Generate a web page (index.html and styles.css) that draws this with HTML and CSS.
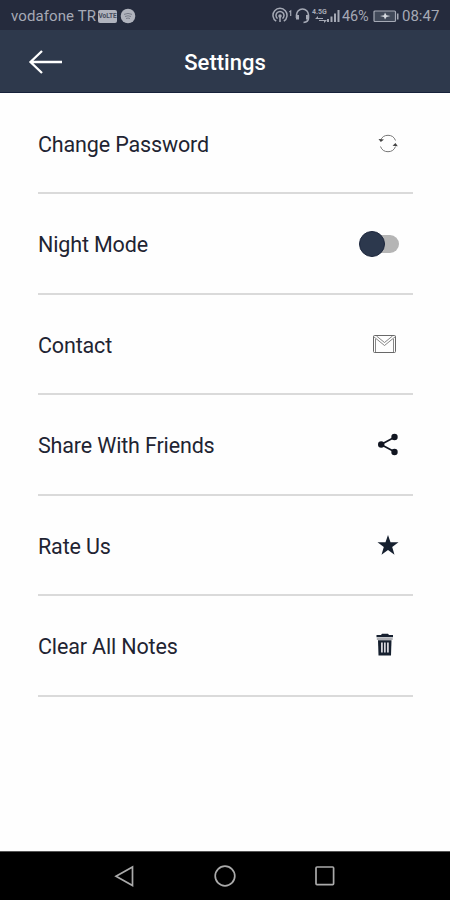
FILE: index.html
```html
<!DOCTYPE html>
<html lang="en">
<head>
<meta charset="utf-8">
<title>Settings</title>
<link rel="stylesheet" href="styles.css">
</head>
<body>
<div class="status">
  <span class="carrier">vodafone TR</span>
  <span class="volte">VoLTE</span>
  <svg class="badge" width="16" height="16" viewBox="0 0 16 16"><circle cx="8" cy="8" r="7.3" fill="#b0b3bd"/><path d="M4 6.4q4-2 8 0M5 8.5q3-1.5 6 0M6 10.5q2-1 4 0" fill="none" stroke="#777b88"/></svg>
  <div class="indicators">
    <svg width="22" height="18" viewBox="0 0 22 18" fill="none" stroke="#a5a9b5" stroke-width="1.5"><path d="M4.2 14.2a7 7 0 1 1 7.6 0M5.5 11.6a4 4 0 1 1 5 0M8 9v6"/><circle cx="8" cy="9" r="1" fill="#a5a9b5"/><path d="M17.3 5l1.4-1v5" stroke-width="1.2"/></svg>
    <svg width="17" height="18" viewBox="0 0 17 18" fill="none" stroke="#a5a9b5" stroke-width="1.6"><path d="M2.5 11V8a6 6 0 0 1 12 0v3q0 4-5 4.500"/><path d="M3.500 8v4.500M13.500 8v4.500" stroke-width="3"/></svg>
    <div class="network"><span>4.5G</span><svg width="12" height="7" viewBox="0 0 12 7" fill="#a5a9b5"><path d="M0 3l3-3v2h5v1zM12 4l-3 3V5H4V4z"/></svg></div>
    <svg class="signal" width="13" height="16" viewBox="0 0 13 16" fill="#a5a9b5"><path d="M0 11h2v3H0zM3.500 8.500h2V14h-2zM7 5.500h2V14H7zM10.500 2h2v12h-2z"/></svg>
    <span class="percent">46%</span>
    <svg class="battery" width="26" height="13" viewBox="0 0 26 13"><rect x="1" y="1" width="21.500" height="10.500" rx="1" fill="#414959" stroke="#a5a9b5" stroke-width="1.200"/><path d="M24 3.500h1.500v6H24z" fill="#a5a9b5"/><path d="M7 6l4-.8 1-2.700 1.500 2.700 4 .800-4 1-1.500 2.500-1-2.500z" fill="#d7dae0"/></svg>
    <span class="clock">08:47</span>
  </div>
</div>
<header class="bar">
  <svg class="back" width="36" height="28" viewBox="0 0 36 28" fill="none" stroke="#fff" stroke-width="2.300"><path d="M34 14H3M14 3L2.500 14 14 25"/></svg>
  <h1>Settings</h1>
</header>
<main>
  <div class="row"><span>Change Password</span>
    <svg width="50" height="28" viewBox="0 0 50 28" fill="none" stroke="#777" stroke-width="1"><path d="M17.500 10.500a8 8 0 0 1 15 0M32.500 16.500a8 8 0 0 1-15 0"/><path d="M15.500 9l2.300 3 3.200-2.500zM29.500 15.800l3-2.800 2.300 3.300z" fill="#444" stroke="none"/></svg></div>
  <div class="row"><span>Night Mode</span>
    <div class="switch"><i></i></div></div>
  <div class="row"><span>Contact</span>
    <svg width="50" height="28" viewBox="0 0 50 28" fill="none" stroke="#686868" stroke-width="1"><rect x="10.500" y="4.500" width="22" height="17" rx="1"/><path d="M10.500 5.500l11 9 11-9M13.500 5l8 6.500 8-6.500M12.500 8v13M30.500 8v13" stroke-width=".8"/></svg></div>
  <div class="row"><span>Share With Friends</span>
    <svg width="50" height="28" viewBox="0 0 50 28" fill="#111521" stroke="#111521"><path d="M31.500 6.200L18 13.500l13.500 7.300" fill="none" stroke-width="1.700"/><g stroke="none"><circle cx="31.500" cy="6" r="3.200"/><circle cx="18.200" cy="13.500" r="3.200"/><circle cx="31.500" cy="21" r="3.200"/></g></svg></div>
  <div class="row"><span>Rate Us</span>
    <svg width="50" height="28" viewBox="0 0 50 28" fill="#16202f"><path d="M25 3l2.500 7.200H35.500l-6.300 4.800 2.300 7.700L25 18l-6.500 4.700 2.300-7.700-6.300-4.800H22.500z"/></svg></div>
  <div class="row"><span>Clear All Notes</span>
    <svg width="50" height="28" viewBox="0 0 50 28"><path d="M19 1.800h6l1 1.200h4v2.300H13.500V3H18z" fill="#16202f"/><path d="M13.800 6.200h15.900v1.600H13.800z" fill="#9b9da3"/><path d="M15 8.200h13.500l-.5 15.300H15.500z" fill="#16202f"/><path d="M18 10.500h1.800v10H18zM21 10.500h1.700v10H21zM24 10.500h1.800v10H24z" fill="#d4d4da"/></svg></div>
</main>
<nav>
  <svg width="24" height="24" viewBox="0 0 24 24"><path d="M19.500 3v18.500L3 12.300z"/></svg>
  <svg width="24" height="24" viewBox="0 0 24 24"><circle cx="12" cy="12" r="9.800"/></svg>
  <svg width="24" height="24" viewBox="0 0 24 24"><rect x="3" y="3" width="17.600" height="17.600" rx="1"/></svg>
</nav>
</body>
</html>
```
FILE: styles.css
```css
* { box-sizing: border-box; }
body { margin: 0; width: 450px; height: 900px; display: flex; flex-direction: column; background: #fefefe; font-family: Roboto, sans-serif; overflow: hidden; }
svg { display: block; flex: none; }
.status { height: 30px; padding: 2px 10px 0 11px; display: flex; align-items: center; background: #252b3d; color: #a5a9b5; font-size: 15px; white-space: nowrap; }
.carrier { width: 87px; flex: none; letter-spacing: .1px; }
.volte { width: 19px; height: 13px; flex: none; border-radius: 2px; background: #b0b3bd; color: #454b5b; font-size: 6.5px; font-weight: 700; line-height: 13px; text-align: center; }
.badge { margin-left: 3px; }
.indicators { margin-left: auto; display: flex; align-items: center; }
.network { width: 15px; margin-left: 1px; font-size: 7px; line-height: 7px; font-weight: 700; }
.network svg { margin-left: 3px; }
.percent { width: 28px; margin-left: 2px; font-size: 14.5px; letter-spacing: -.2px; }
.battery { margin-left: 3px; }
.clock { width: 38px; margin-left: 3px; }
.bar { height: 63px; display: grid; grid-template-columns: 62px 1fr 62px; align-items: center; background: #2e394c; border-bottom: 1px solid #17213a; color: #fff; }
.back { margin: 1px 0 0 28px; }
h1 { margin: 3px 0 0; font-size: 22px; line-height: 28px; font-weight: 500; text-align: center; }
main { flex: 1; padding: .5px 37px 0 38px; }
.row { height: 100.5px; padding-top: 2px; border-bottom: 2px solid #dadada; display: flex; align-items: center; justify-content: space-between; color: #1f2432; font-size: 21.5px; letter-spacing: -.15px; white-space: nowrap; }
.row span { padding-top: 1px; }
.switch { width: 54px; height: 26px; display: flex; align-items: center; }
.switch::after { content: ""; width: 26px; height: 18px; margin-left: -12px; border-radius: 0 9px 9px 0; background: #b5b5b5; }
.switch i { position: relative; width: 26px; height: 26px; border-radius: 50%; background: #2c384d; border: 1px solid #1c263c; }
nav { height: 49px; background: #000; border-top: 1px solid #555; display: flex; justify-content: center; align-items: center; gap: 76px; }
nav svg { fill: none; stroke: #aaa; stroke-width: 1.7; }
```
